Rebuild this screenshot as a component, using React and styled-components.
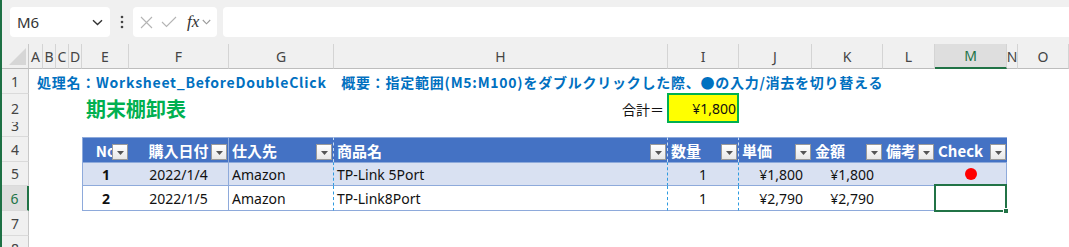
import React from 'react';
import styled, { createGlobalStyle } from 'styled-components';

const GlobalStyle = createGlobalStyle`
	html, body {
		margin: 0;
		padding: 0;
		background: #fff;
		overflow: hidden;
	}
	* {
		box-sizing: border-box;
	}
`;

const COLS = '27px 14px 13px 13px 13px 47px 100px 105px 334px 71px 73px 71px 52px 72px 11px 1fr';
const LETTERS = ['A', 'B', 'C', 'D', 'E', 'F', 'G', 'H', 'I', 'J', 'K', 'L', 'M', 'N', 'O'];
const SANS = `"Noto Sans", "Noto Sans CJK JP", sans-serif`;
const JP = `"Noto Sans CJK JP", "Noto Sans", sans-serif`;

const columns = [
	{ key: 'no', label: 'No', head: 'center', body: 'center', bold: true },
	{ key: 'date', label: '購入日付', head: 'center', body: 'center', line: 'solid' },
	{ key: 'vendor', label: '仕入先', head: 'left', body: 'left', line: 'dashed' },
	{ key: 'item', label: '商品名', head: 'left', body: 'left', line: 'dashed' },
	{ key: 'qty', label: '数量', head: 'left', body: 'center', line: 'dashed' },
	{ key: 'price', label: '単価', head: 'left', body: 'right' },
	{ key: 'amount', label: '金額', head: 'left', body: 'right' },
	{ key: 'note', label: '備考', head: 'left', body: 'left' },
	{ key: 'check', label: 'Check', head: 'left', body: 'center' },
];

const rows = [
	{ no: 1, date: '2022/1/4', vendor: 'Amazon', item: 'TP-Link 5Port', qty: 1, price: '¥1,800', amount: '¥1,800', note: '', check: true },
	{ no: 2, date: '2022/1/5', vendor: 'Amazon', item: 'TP-Link8Port', qty: 1, price: '¥2,790', amount: '¥2,790', note: '', check: false },
];

const App = () => {
	return (
		<Window>
			<GlobalStyle />
			<FormulaBar>
				<NameBox>
					<span>M6</span>
					<svg width="11" height="7" viewBox="0 0 11 7">
						<path d="M1 1.2 L5.5 5.5 L10 1.2" fill="none" stroke="#333" strokeWidth="1.4" />
					</svg>
				</NameBox>
				<svg width="4" height="14" viewBox="0 0 4 14">
					<circle cx="2" cy="2" r="1.3" fill="#444" />
					<circle cx="2" cy="7" r="1.3" fill="#444" />
					<circle cx="2" cy="12" r="1.3" fill="#444" />
				</svg>
				<FxBox>
					<svg width="13" height="13" viewBox="0 0 13 13">
						<path d="M1 1 L12 12 M12 1 L1 12" stroke="#b4b4b4" strokeWidth="1.1" />
					</svg>
					<svg width="16" height="12" viewBox="0 0 16 12">
						<path d="M1 6 L5.5 10.5 L15 1" fill="none" stroke="#b4b4b4" strokeWidth="1.1" />
					</svg>
					<FxText>fx</FxText>
					<svg width="9" height="6" viewBox="0 0 9 6">
						<path d="M0.8 1 L4.5 4.8 L8.2 1" fill="none" stroke="#9a9a9a" strokeWidth="1.1" />
					</svg>
				</FxBox>
				<FormulaInput />
			</FormulaBar>

			<Row $h={25}>
				<Corner>
					<svg width="17" height="17" viewBox="0 0 17 17">
						<path d="M17 0 L17 17 L0 17 Z" fill="#d6d6d6" />
					</svg>
				</Corner>
				{LETTERS.map((l) => (
					<ColHead key={l} $active={l === 'M'}>
						{l}
					</ColHead>
				))}
			</Row>

			<Row $h={25}>
				<RowHead>1</RowHead>
				<Note>
					処理名：Worksheet_BeforeDoubleClick　概要：指定範囲(M5:M100)をダブルクリックした際、●の入力/消去を切り替える
				</Note>
			</Row>

			<Row $h={28}>
				<RowHead>2</RowHead>
				<Blank $span={4} />
				<Title>期末棚卸表</Title>
				<Label>合計＝</Label>
				<Total>¥1,800</Total>
			</Row>

			<Row $h={15}>
				<RowHead $clip>3</RowHead>
			</Row>

			<Row $h={25}>
				<RowHead>4</RowHead>
				<Blank $span={4} />
				{columns.map((c, i) => (
					<HeadCell
						key={c.key}
						$align={c.head}
						$line={c.line}
						$first={i === 0}
						$last={i === columns.length - 1}
					>
						<HeadText>{c.label}</HeadText>
						<FilterButton>
							<svg width="7" height="4" viewBox="0 0 7 4">
								<path d="M0 0 L7 0 L3.5 4 Z" fill="#555" />
							</svg>
						</FilterButton>
					</HeadCell>
				))}
			</Row>

			{rows.map((r, ri) => (
				<Row key={r.no} $h={ri === 0 ? 24 : 25}>
					<RowHead $active={ri === 1}>{ri + 5}</RowHead>
					<Blank $span={4} />
					{columns.map((c, i) => (
						<BodyCell
							key={c.key}
							$align={c.body}
							$bold={c.bold}
							$line={c.line}
							$band={ri === 0}
							$first={i === 0}
							$last={i === columns.length - 1}
						>
							{c.key === 'check' ? r.check && <Dot /> : r[c.key]}
							{c.key === 'check' && ri === 1 && (
								<Selection>
									<Handle />
								</Selection>
							)}
						</BodyCell>
					))}
				</Row>
			))}

			<Row $h={25}>
				<RowHead>7</RowHead>
			</Row>
			<Row $h={25}>
				<RowHead>8</RowHead>
			</Row>
		</Window>
	);
};

export default App;

const Window = styled.div`
	width: 1069px;
	height: 247px;
	overflow: hidden;
	border-left: 2px solid #1e7145;
	background: #fff;
	font-family: ${SANS};
`;

const FormulaBar = styled.div`
	height: 44px;
	display: flex;
	align-items: center;
	gap: 9px;
	padding-left: 8px;
	background: #f0f0f0;
`;

const NameBox = styled.div`
	width: 100px;
	height: 30px;
	display: flex;
	align-items: center;
	justify-content: space-between;
	padding: 0 7px 0 7px;
	background: #fff;
	border-radius: 4px;
	font-size: 15px;
	color: #333;
	margin-right: 1px;
`;

const FxBox = styled.div`
	width: 84px;
	height: 30px;
	display: flex;
	align-items: center;
	gap: 8px;
	padding-left: 7px;
	background: #fff;
	border-radius: 4px;
`;

const FxText = styled.span`
	font-family: 'Liberation Serif', serif;
	font-style: italic;
	font-size: 17px;
	color: #333;
	margin-left: 2px;
	margin-right: -5px;
`;

const FormulaInput = styled.div`
	flex: 1;
	height: 30px;
	margin-left: -3px;
	background: #fff;
	border-radius: 4px 0 0 4px;
`;

const Row = styled.div`
	display: grid;
	grid-template-columns: ${COLS};
	height: ${(p) => p.$h}px;
`;

const Corner = styled.div`
	background: #f0f0f0;
	border-right: 1px solid #c8c8c8;
	border-bottom: 1px solid #bdbdbd;
	display: flex;
	align-items: flex-end;
	justify-content: flex-end;
	padding: 0 2px 3px 0;
`;

const ColHead = styled.div`
	background: ${(p) => (p.$active ? '#dedede' : '#f0f0f0')};
	border-right: 1px solid #d4d4d4;
	border-bottom: ${(p) => (p.$active ? '2px solid #217346' : '1px solid #bdbdbd')};
	color: ${(p) => (p.$active ? '#217346' : '#444')};
	font-size: 14px;
	display: flex;
	align-items: center;
	justify-content: center;
	overflow: hidden;
`;

const RowHead = styled.div`
	background: ${(p) => (p.$active ? '#dedede' : '#f0f0f0')};
	border-right: ${(p) => (p.$active ? '2px solid #217346' : '1px solid #c8c8c8')};
	border-bottom: 1px solid #dadada;
	color: ${(p) => (p.$active ? '#217346' : '#444')};
	font-size: 14px;
	display: flex;
	align-items: ${(p) => (p.$clip ? 'flex-start' : 'center')};
	justify-content: center;
	overflow: hidden;
	line-height: ${(p) => (p.$clip ? '8px' : 'normal')};
`;

const Blank = styled.div`
	grid-column: span ${(p) => p.$span || 1};
`;

const Note = styled.div`
	grid-column: span 15;
	padding-left: 8px;
	display: flex;
	align-items: center;
	white-space: nowrap;
	font-family: ${JP};
	font-weight: 700;
	font-size: 14px;
	color: #0070c0;
	letter-spacing: 0.75px;
`;

const Title = styled.div`
	grid-column: span 3;
	display: flex;
	align-items: center;
	padding-left: 4px;
	font-family: ${JP};
	font-weight: 700;
	font-size: 20px;
	color: #00b050;
`;

const Label = styled.div`
	display: flex;
	align-items: center;
	justify-content: flex-end;
	padding-right: 4px;
	font-family: ${JP};
	font-size: 14px;
	color: #111;
`;

const Total = styled.div`
	display: flex;
	align-items: center;
	justify-content: flex-end;
	padding-right: 1px;
	margin: -1px 0 0 -1px;
	background: #ffff00;
	border: 2px solid #00b050;
	font-size: 14px;
	color: #111;
`;

const HeadCell = styled.div`
	position: relative;
	display: flex;
	align-items: center;
	justify-content: ${(p) => (p.$align === 'center' ? 'center' : 'flex-start')};
	padding: ${(p) => (p.$align === 'center' ? '0' : '0 0 0 3px')};
	background: #4472c4;
	border-left: ${(p) => (p.$first ? '1px solid #8eaadb' : 'none')};
	border-right: ${(p) =>
		p.$line === 'solid' ? '1px solid #8eaadb' : p.$line === 'dashed' ? '1px dashed #c8ddf3' : 'none'};
	border-top: 1px solid #8eaadb;
	white-space: nowrap;
	overflow: hidden;
`;

const HeadText = styled.span`
	font-family: ${JP};
	font-weight: 700;
	font-size: 15px;
	color: #fff;
`;

const FilterButton = styled.div`
	position: absolute;
	right: 1px;
	bottom: 2px;
	width: 16px;
	height: 16px;
	display: flex;
	align-items: center;
	justify-content: center;
	padding-top: 2px;
	background: linear-gradient(#ffffff, #e8e8e8);
	border: 1px solid #9a9a9a;
`;

const BodyCell = styled.div`
	position: relative;
	display: flex;
	align-items: center;
	justify-content: ${(p) =>
		p.$align === 'center' ? 'center' : p.$align === 'right' ? 'flex-end' : 'flex-start'};
	padding: ${(p) => (p.$align === 'right' ? '0 9px 0 0' : p.$align === 'left' ? '0 0 0 3px' : '0')};
	background: ${(p) => (p.$band ? '#d9e1f2' : '#fff')};
	border-bottom: 1px solid #8eaadb;
	border-top: ${(p) => (p.$band ? '1px solid #8eaadb' : 'none')};
	border-left: ${(p) => (p.$first ? '1px solid #8eaadb' : 'none')};
	border-right: ${(p) =>
		p.$last || p.$line === 'solid'
			? '1px solid #8eaadb'
			: p.$line === 'dashed'
			? '1px dashed #2e9be0'
			: 'none'};
	font-family: ${SANS};
	font-size: 14px;
	font-weight: ${(p) => (p.$bold ? 700 : 400)};
	color: #111;
	white-space: nowrap;
`;

const Dot = styled.span`
	width: 12px;
	height: 12px;
	border-radius: 50%;
	background: #ff0000;
`;

const Selection = styled.div`
	position: absolute;
	left: -1px;
	right: -1px;
	top: -2px;
	bottom: -2px;
	border: 2px solid #217346;
	z-index: 2;
`;

const Handle = styled.div`
	position: absolute;
	right: -4px;
	bottom: -4px;
	width: 6px;
	height: 6px;
	background: #217346;
	border: 1px solid #fff;
`;
